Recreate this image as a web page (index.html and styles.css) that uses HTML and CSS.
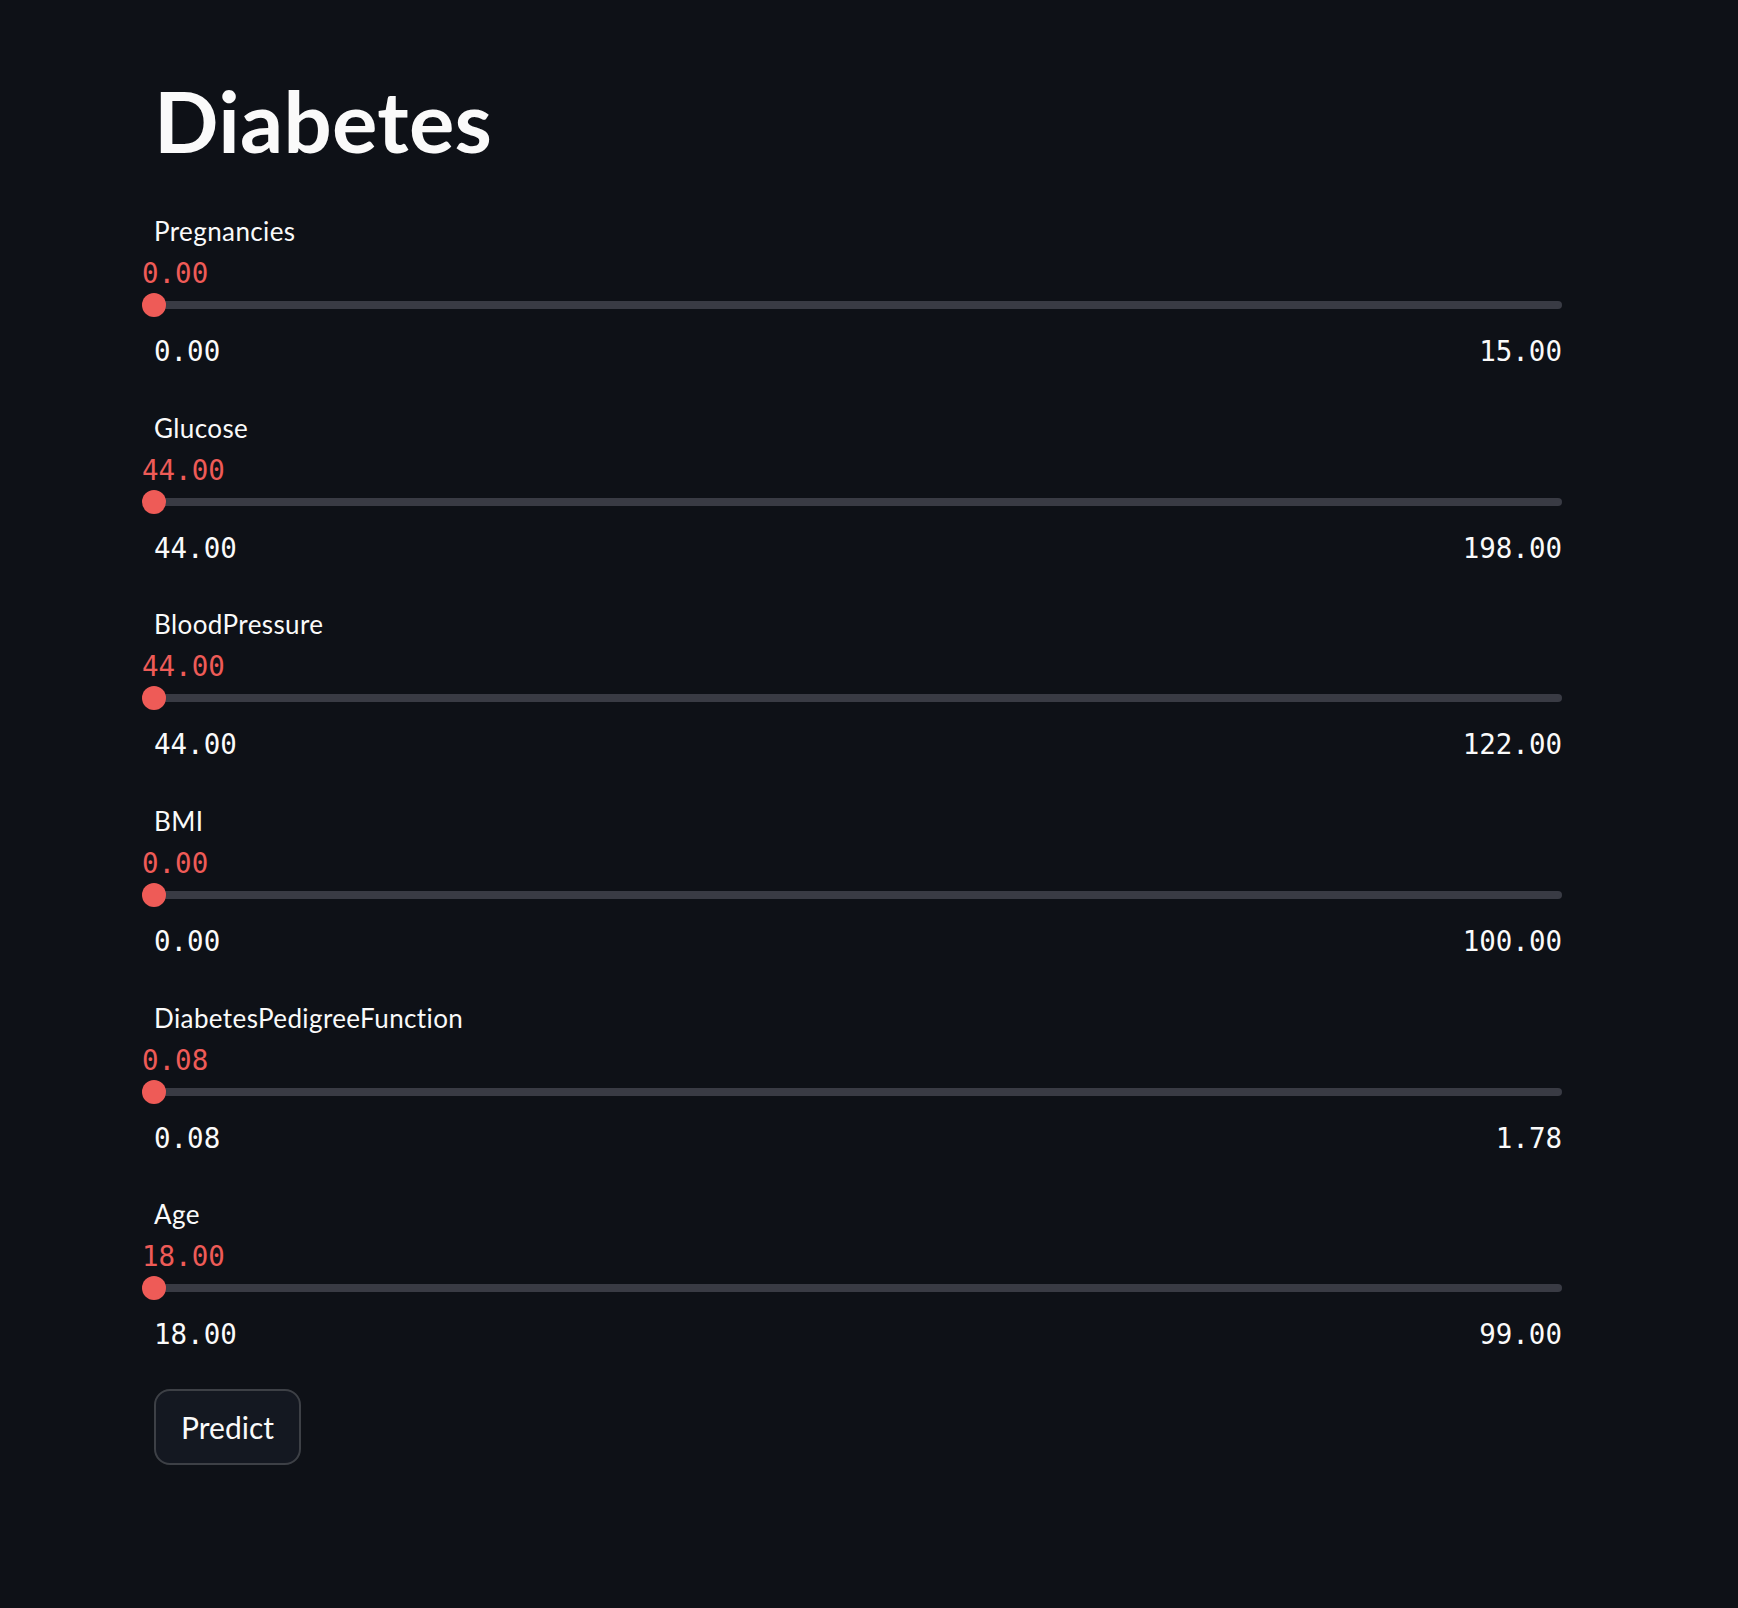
FILE: index.html
```html
<!DOCTYPE html>
<html lang="en">
<head>
<meta charset="utf-8">
<title>Diabetes</title>
<link rel="stylesheet" href="styles.css">
</head>
<body>
<main class="page">
  <h1 class="title">Diabetes</h1>

  <section class="slider">
    <div class="label">Pregnancies</div>
    <div class="value">0.00</div>
    <div class="track"><span class="thumb"></span></div>
    <div class="ticks"><span>0.00</span><span>15.00</span></div>
  </section>

  <section class="slider">
    <div class="label">Glucose</div>
    <div class="value">44.00</div>
    <div class="track"><span class="thumb"></span></div>
    <div class="ticks"><span>44.00</span><span>198.00</span></div>
  </section>

  <section class="slider">
    <div class="label">BloodPressure</div>
    <div class="value">44.00</div>
    <div class="track"><span class="thumb"></span></div>
    <div class="ticks"><span>44.00</span><span>122.00</span></div>
  </section>

  <section class="slider">
    <div class="label">BMI</div>
    <div class="value">0.00</div>
    <div class="track"><span class="thumb"></span></div>
    <div class="ticks"><span>0.00</span><span>100.00</span></div>
  </section>

  <section class="slider">
    <div class="label">DiabetesPedigreeFunction</div>
    <div class="value">0.08</div>
    <div class="track"><span class="thumb"></span></div>
    <div class="ticks"><span>0.08</span><span>1.78</span></div>
  </section>

  <section class="slider last">
    <div class="label">Age</div>
    <div class="value">18.00</div>
    <div class="track"><span class="thumb"></span></div>
    <div class="ticks"><span>18.00</span><span>99.00</span></div>
  </section>

  <button class="btn" type="button">Predict</button>
</main>
</body>
</html>
```

FILE: styles.css
```css
html, body {
  margin: 0;
  padding: 0;
  background: #0e1117;
}

body {
  min-height: 1608px;
  color: #fafafa;
  font-family: Lato, "Noto Sans", sans-serif;
}

.page {
  width: 1408px;
  padding: 70px 0 0 154px;
}

.title {
  margin: 0 0 43px 0;
  font-size: 85px;
  line-height: 100px;
  font-weight: 700;
  letter-spacing: 0.3px;
}

.slider {
  margin-bottom: 42.7px;
}

.slider.last {
  margin-bottom: 38.5px;
}

.label {
  font-size: 26px;
  line-height: 36px;
  height: 36px;
  letter-spacing: 0.4px;
}

.value {
  margin: 8px 0 0 -12px;
  height: 32px;
  font-family: "DejaVu Sans Mono", "Liberation Mono", monospace;
  font-size: 27.5px;
  line-height: 32px;
  color: #ee5b57;
}

.track {
  position: relative;
  margin-top: 4px;
  height: 24px;
}

.track::before {
  content: "";
  display: block;
  position: absolute;
  left: 0;
  right: 0;
  top: 8px;
  height: 8px;
  border-radius: 4px;
  background: #393b44;
}

.thumb {
  position: absolute;
  left: -12px;
  top: 0;
  width: 24px;
  height: 24px;
  border-radius: 50%;
  background: #ee5b57;
}

.ticks {
  display: flex;
  justify-content: space-between;
  margin-top: 18px;
  height: 32px;
  font-family: "DejaVu Sans Mono", "Liberation Mono", monospace;
  font-size: 27.5px;
  line-height: 32px;
  color: #fafafa;
}

.btn {
  display: flex;
  align-items: center;
  justify-content: center;
  box-sizing: border-box;
  width: 147px;
  height: 76px;
  padding: 0 24px;
  border: 2px solid #3d4046;
  border-radius: 16px;
  background: #141821;
  color: #fafafa;
  font-family: Lato, "Noto Sans", sans-serif;
  font-size: 30px;
  line-height: 1;
}
```
